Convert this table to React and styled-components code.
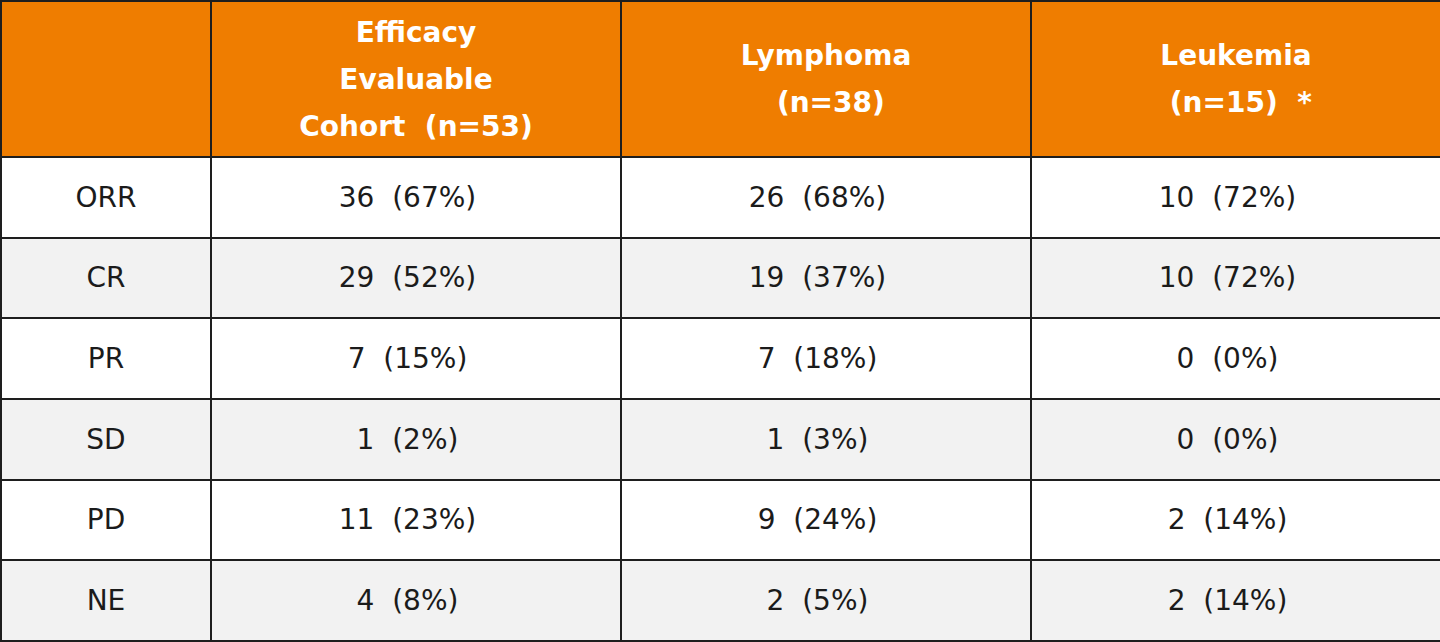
import React from 'react'
import styled, { createGlobalStyle } from 'styled-components'

const GlobalStyle = createGlobalStyle`
  html, body {
    margin: 0;
    padding: 0;
    background: #ffffff;
  }
`

const Table = styled.table`
  width: 1440px;
  height: 642px;
  border-collapse: collapse;
  table-layout: fixed;
  font-family: "DejaVu Sans", "Noto Sans", sans-serif;
  font-size: 28px;
  color: #1b1b1b;
`

const Col = styled.col`
  width: ${({ w }) => w}px;
`

const HeadCell = styled.th`
  height: 154px;
  background: #ef7d00;
  color: #ffffff;
  font-weight: bold;
  line-height: 47px;
  text-align: center;
  vertical-align: middle;
  white-space: pre;
  border: 2px solid #1e1e1e;
  padding: 0;
`

const Row = styled.tr`
  background: ${({ shaded }) => (shaded ? '#f2f2f2' : '#ffffff')};
`

const Cell = styled.td`
  height: 77px;
  text-align: center;
  vertical-align: middle;
  white-space: pre;
  border: 2px solid #1e1e1e;
  padding: 0 ${({ label }) => (label ? 0 : 17)}px 0 0;
`

const rows = [
  ['ORR', '36  (67%)', '26  (68%)', '10  (72%)'],
  ['CR', '29  (52%)', '19  (37%)', '10  (72%)'],
  ['PR', '7  (15%)', '7  (18%)', '0  (0%)'],
  ['SD', '1  (2%)', '1  (3%)', '0  (0%)'],
  ['PD', '11  (23%)', '9  (24%)', '2  (14%)'],
  ['NE', '4  (8%)', '2  (5%)', '2  (14%)'],
]

export default function App() {
  return (
    <>
      <GlobalStyle />
      <Table>
        <colgroup>
          <Col w={210} />
          <Col w={410} />
          <Col w={410} />
          <Col w={410} />
        </colgroup>
        <thead>
          <tr>
            <HeadCell />
            <HeadCell>{'Efficacy\nEvaluable\nCohort  (n=53)'}</HeadCell>
            <HeadCell>{'Lymphoma\n (n=38)'}</HeadCell>
            <HeadCell>{'Leukemia\n (n=15)  *'}</HeadCell>
          </tr>
        </thead>
        <tbody>
          {rows.map((r, i) => (
            <Row key={r[0]} shaded={i % 2 === 1}>
              {r.map((v, j) => (
                <Cell key={j} label={j === 0}>{v}</Cell>
              ))}
            </Row>
          ))}
        </tbody>
      </Table>
    </>
  )
}
